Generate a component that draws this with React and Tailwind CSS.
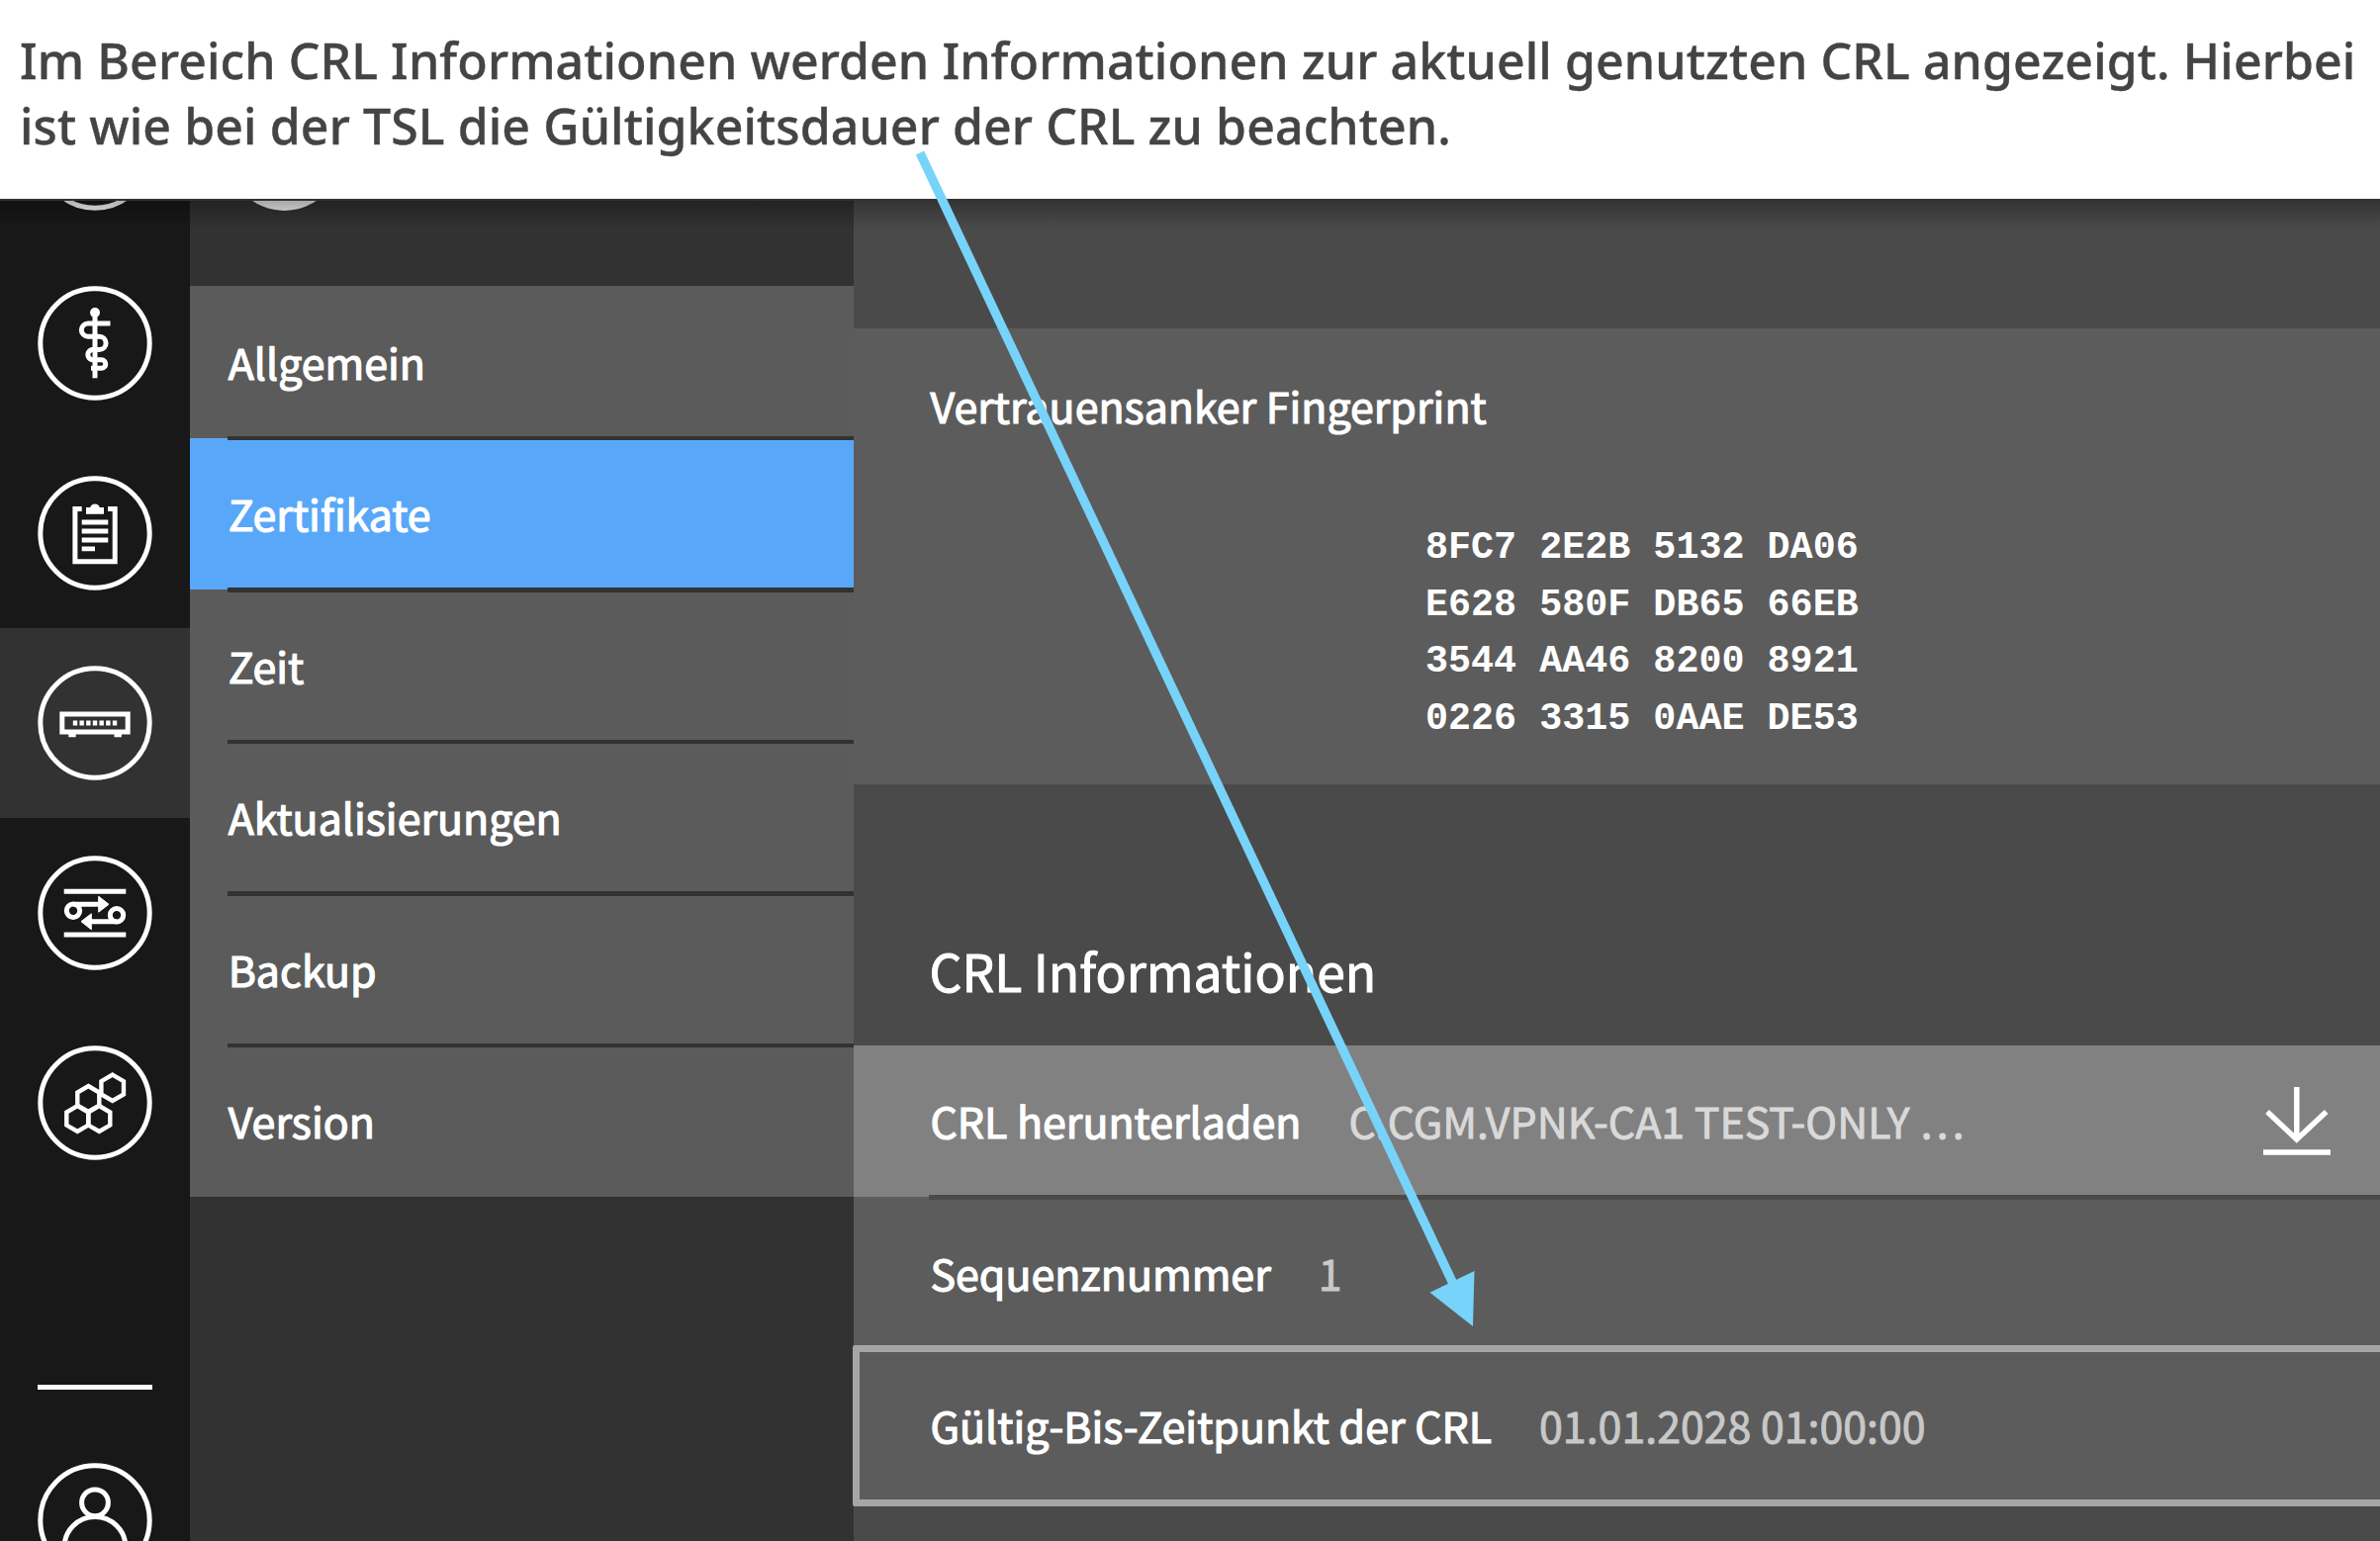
const ui = "font-['Noto_Sans_CJK_SC','Noto_Sans',sans-serif]";

function Ring({ children }) {
  return (
    <svg className="block size-[116px] shrink-0" viewBox="0 0 116 116" fill="none" stroke="#fff" strokeWidth="5">
      <circle cx="58" cy="58" r="55.2" strokeWidth="5" />
      {children}
    </svg>
  );
}

function StaffIcon() {
  return (
    <Ring>
      <circle cx="58" cy="27" r="5" fill="#fff" stroke="none" />
      <path d="M58 27V93.3" />
      <path d="M73.5 38H51a6.65 6.65 0 0 0 0 13.3H62.5a6.6 6.6 0 0 1 0 13.2H55a5.2 5.2 0 0 0 0 10.2H64.5a4.3 4.3 0 0 1 0 8.6H54" />
    </Ring>
  );
}

function ClipboardIcon() {
  return (
    <Ring>
      <path d="M44.7 33.4H37.9V86.8H78.2V33.4H71" />
      <path d="M49 38.7V32H53.2a5 5 0 0 1 9.6 0H67V38.7Z" fill="#fff" stroke="none" />
      <path d="M44.7 47H71.3M44.7 56H71.3M44.7 65H71.3M44.7 73.8H58" strokeWidth="4.8" />
    </Ring>
  );
}

function RouterIcon() {
  return (
    <Ring>
      <rect x="24.8" y="49" width="66.4" height="18" />
      <path d="M31.3 70.5H38.7M77.5 70.5H84.9" strokeWidth="3.4" />
      <path d="M35.8 58H81" strokeWidth="4.8" strokeDasharray="4.4 2.27" />
    </Ring>
  );
}

function TransferIcon() {
  return (
    <Ring>
      <path d="M26.7 36.2H89.3M26.7 80H89.3" />
      <circle cx="36" cy="55.8" r="6.7" />
      <circle cx="80" cy="60.2" r="6.7" />
      <path d="M36 49.3H65M80 66.7H50" />
      <path d="M61.7 41.2V57.2L72 49.3ZM54.3 58.8V74.8L44 66.7Z" fill="#fff" stroke="#fff" strokeWidth="1" />
    </Ring>
  );
}

function HexIcon() {
  return (
    <Ring>
      <g strokeWidth="4.4">
        <path d="M75.7 29.6L87 36.2V49.4L75.7 56L64.4 49.4V36.2Z" />
        <path d="M51.3 41L62.3 47.5V60.6L51.3 67L40.3 60.6V47.5Z" />
        <path d="M40.3 61L51.3 67.5V80.6L40.3 87L29.3 80.6V67.5Z" />
        <path d="M62.3 61L73.3 67.5V80.6L62.3 87L51.3 80.6V67.5Z" />
      </g>
    </Ring>
  );
}

function UserIcon() {
  return (
    <Ring>
      <circle cx="58" cy="40.3" r="13.4" />
      <path d="M27 92V85.5a31 31 0 0 1 62 0V92" />
    </Ring>
  );
}

function NavItem({ active, children }) {
  return (
    <div className={`flex h-[191.9px] shrink-0 items-center justify-center ${active ? "bg-[#323232]" : ""}`}>
      {children}
    </div>
  );
}

const menu = ["Allgemein", "Zertifikate", "Zeit", "Aktualisierungen", "Backup", "Version"];

function MenuItem({ label, active, last }) {
  return (
    <li className={`relative flex h-[153.5px] items-center pb-[1.5px] pl-[39px] ${active ? "bg-[#59a7f8]" : "bg-[#5b5b5b]"}`}>
      <span className="text-[42.9px] leading-none [-webkit-text-stroke:1.2px_white]">{label}</span>
      {!last && <span className="absolute right-0 -bottom-[2.5px] left-[38.5px] z-10 h-[4.5px] bg-[#323232]" />}
    </li>
  );
}

function Row({ label, value, highlighted, children }) {
  return (
    <div
      className={`relative flex h-[153.5px] items-center pr-[50px] pl-[77px] leading-none ${
        highlighted ? "bg-[#818181] pb-[2px] text-[#d9d9d9]" : "bg-[#5c5c5c] text-[#c8c8c8]"
      }`}
    >
      <span className="text-[42.9px] whitespace-nowrap text-white [-webkit-text-stroke:1.2px_white]">{label}</span>
      <span className="ml-[48px] text-[42.9px] whitespace-nowrap [-webkit-text-stroke:0.9px_currentColor]">{value}</span>
      {children}
    </div>
  );
}

export default function App() {
  return (
    <div className="relative h-[1558px] w-[2406px] overflow-hidden bg-white">
      <header className="h-[201px] pt-[28px] pl-[20px] font-['Noto_Sans',sans-serif] text-[50px] leading-[66px] font-medium tracking-[0.09px] whitespace-nowrap text-[#444] [-webkit-text-stroke:0.4px_#444]">
        <p>Im Bereich CRL Informationen werden Informationen zur aktuell genutzten CRL angezeigt. Hierbei</p>
        <p>ist wie bei der TSL die Gültigkeitsdauer der CRL zu beachten.</p>
      </header>

      <div className={`relative flex h-[1357px] overflow-hidden text-white ${ui}`}>
        <nav className="-mt-[141.5px] flex w-[191.7px] shrink-0 flex-col self-start bg-[#181818] pb-40">
          <NavItem>
            <Ring />
          </NavItem>
          <NavItem>
            <StaffIcon />
          </NavItem>
          <NavItem>
            <ClipboardIcon />
          </NavItem>
          <NavItem active>
            <RouterIcon />
          </NavItem>
          <NavItem>
            <TransferIcon />
          </NavItem>
          <NavItem>
            <HexIcon />
          </NavItem>
          <div className="mx-auto mt-[189px] h-[5px] w-[116px] shrink-0 bg-white" />
          <div className="mx-auto mt-[74px]">
            <UserIcon />
          </div>
        </nav>

        <aside className="w-[671.8px] shrink-0 bg-[#323232]">
          <div className="flex h-[88px] items-start overflow-hidden pl-[38px]">
            <div className="-mt-[103px] size-[115px] shrink-0 rounded-full bg-[#f0f0f0]" />
          </div>
          <ul>
            {menu.map((label, i) => (
              <MenuItem key={label} label={label} active={i === 1} last={i === menu.length - 1} />
            ))}
          </ul>
        </aside>

        <main className="flex-1 bg-[#4a4a4a]">
          <section className="mt-[131px] h-[461px] bg-[#5c5c5c] pt-[54.5px] pl-[77px]">
            <h3 className="text-[42.9px] leading-[44px] [-webkit-text-stroke:1.2px_white]">Vertrauensanker Fingerprint</h3>
            <pre className="mt-[95.5px] ml-[500.5px] font-['Liberation_Mono',monospace] text-[38.4px] leading-[57.5px] font-bold">
              {"8FC7 2E2B 5132 DA06\nE628 580F DB65 66EB\n3544 AA46 8200 8921\n0226 3315 0AAE DE53"}
            </pre>
          </section>
          <h2 className="flex h-[263.5px] items-end pb-[50px] pl-[76px] text-[51.6px] leading-none [-webkit-text-stroke:1px_white]">
            CRL Informationen
          </h2>
          <section>
            <Row label="CRL herunterladen" value="C.CGM.VPNK-CA1 TEST-ONLY …" highlighted>
              <svg className="mt-[3px] ml-auto block h-[70px] w-[68px]" viewBox="0 0 68 70" fill="none" stroke="#fff" strokeWidth="5.5">
                <path d="M33.8 0V53M4 25L33.8 53L63.7 25M0 66H68" />
              </svg>
              <span className="absolute right-0 -bottom-[2.5px] left-[76px] z-10 h-[4.5px] bg-[#4a4a4a]" />
            </Row>
            <Row label="Sequenznummer" value="1" />
            <div className="relative">
              <Row label="Gültig-Bis-Zeitpunkt der CRL" value="01.01.2028 01:00:00" />
              <div className="absolute -top-[4px] -right-10 -left-[1.5px] h-[163px] rounded-[2px] border-[7px] border-[#a6a6a6]" />
            </div>
          </section>
        </main>

        <div className="absolute inset-x-0 top-0 h-[30px] border-t-2 border-[#333] bg-linear-to-b from-black/30 to-transparent" />
      </div>

      <svg className="absolute top-0 left-0 z-20 h-full w-full" viewBox="0 0 2406 1558" fill="#77d3f9">
        <path d="M930 154.5L1470 1300" stroke="#77d3f9" strokeWidth="9.2" />
        <path d="M1489 1341L1490.5 1285L1445.5 1306.7Z" />
      </svg>
    </div>
  );
}
